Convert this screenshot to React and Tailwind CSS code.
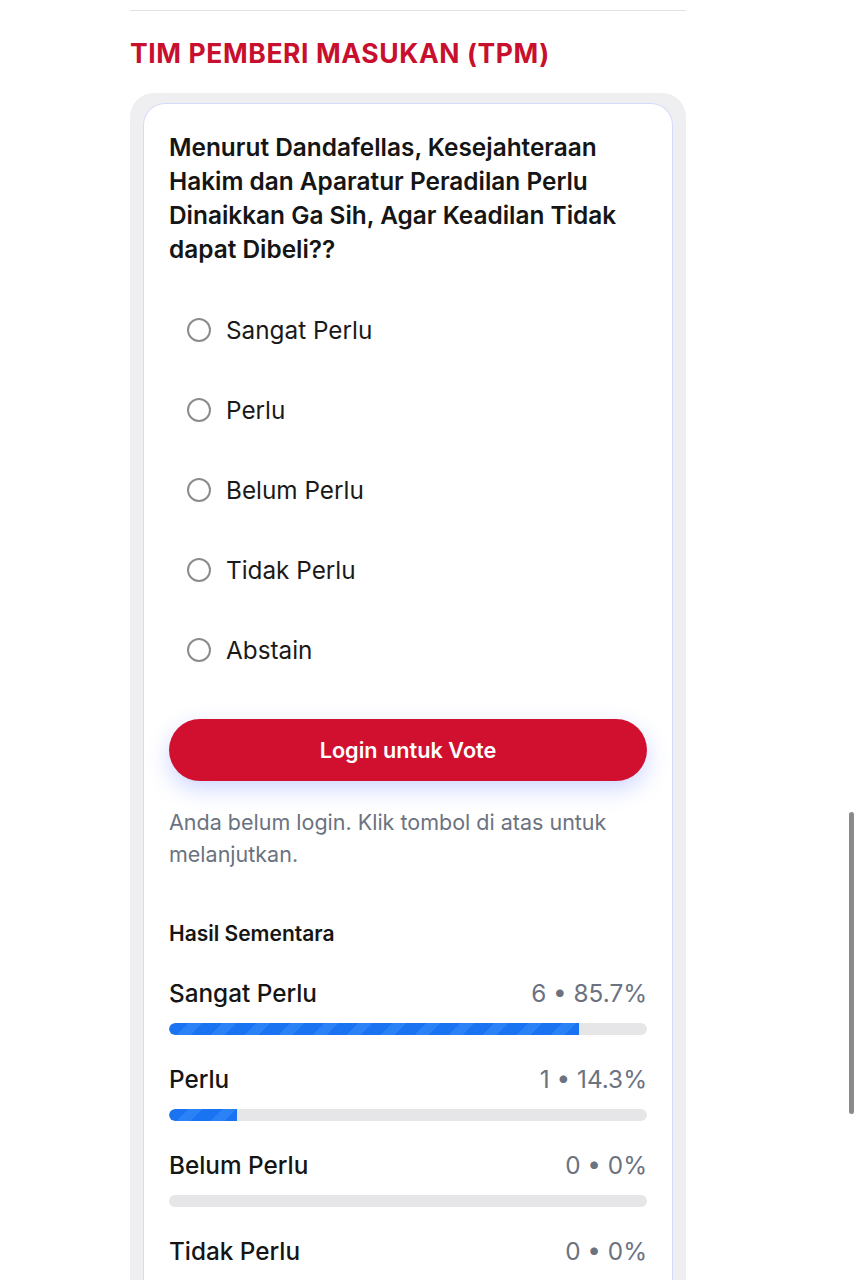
import React from "react";

const options = ["Sangat Perlu", "Perlu", "Belum Perlu", "Tidak Perlu", "Abstain"];

const results = [
  { label: "Sangat Perlu", count: 6, pct: 85.7 },
  { label: "Perlu", count: 1, pct: 14.3 },
  { label: "Belum Perlu", count: 0, pct: 0 },
  { label: "Tidak Perlu", count: 0, pct: 0 },
  { label: "Abstain", count: 0, pct: 0 },
];

const stripes = {
  backgroundImage:
    "repeating-linear-gradient(135deg, #1a73f0 0px, #1a73f0 14px, #2b82f7 14px, #2b82f7 24px)",
};

export default function App() {
  return (
    <div className="min-h-screen bg-white font-['Inter','Noto_Sans',sans-serif] text-[#111]">
      <div className="ml-[130px] w-[556px] pt-[10px] pb-10">
        <div className="border-t border-[#e3e3e6]" />
        <h2 className="mt-[25px] text-[26.5px] leading-[34px] font-bold tracking-[0.6px] text-[#c8102e]">
          TIM PEMBERI MASUKAN (TPM)
        </h2>

        <div className="mt-[23px] rounded-[24px] bg-[#efeff2] px-[13px] pt-[10px]">
          <div className="rounded-t-[22px] border-[1.5px] border-b-0 border-[#d6dafa] bg-white px-[25px] pt-[26px] pb-10">
            <p className="text-[24.4px] leading-[34px] font-semibold text-[#151515]">
              Menurut Dandafellas, Kesejahteraan Hakim dan Aparatur Peradilan Perlu Dinaikkan Ga Sih, Agar Keadilan Tidak dapat Dibeli??
            </p>

            <div className="mt-[24px] flex flex-col">
              {options.map((o) => (
                <label key={o} className="flex h-[80px] items-center pl-[18px]">
                  <span className="h-[24px] w-[24px] rounded-full border-[2px] border-[#8c8c8c]" />
                  <span className="ml-[15px] text-[24.3px] text-[#1a1a1a]">{o}</span>
                </label>
              ))}
            </div>

            <button className="mt-[29px] h-[62px] w-full rounded-full bg-[#d0102e] text-[21.7px] font-semibold text-white shadow-[0_8px_22px_rgba(80,110,255,0.28)]">
              Login untuk Vote
            </button>

            <p className="mt-[25px] text-[21.5px] leading-[32px] text-[#6b7280]">
              Anda belum login. Klik tombol di atas untuk melanjutkan.
            </p>

            <h3 className="mt-[50px] text-[21px] leading-[28px] font-semibold text-[#151515]">
              Hasil Sementara
            </h3>

            <div className="mt-[30px] flex flex-col gap-[29px]">
              {results.map((r) => (
                <div key={r.label}>
                  <div className="flex items-center justify-between text-[24.3px] leading-[30px]">
                    <span className="font-medium text-[#151515]">{r.label}</span>
                    <span className="text-[#6b7280]">
                      {r.count} • {r.pct}%
                    </span>
                  </div>
                  <div className="mt-[15px] h-[12px] w-full overflow-hidden rounded-full bg-[#e6e6e8]">
                    <div
                      className="h-full rounded-l-full"
                      style={{ width: `${r.pct}%`, ...stripes }}
                    />
                  </div>
                </div>
              ))}
            </div>
          </div>
        </div>
      </div>

      <div className="fixed right-[8px] top-[812px] h-[302px] w-[5px] rounded-full bg-[#8a8a8a]" />
    </div>
  );
}
